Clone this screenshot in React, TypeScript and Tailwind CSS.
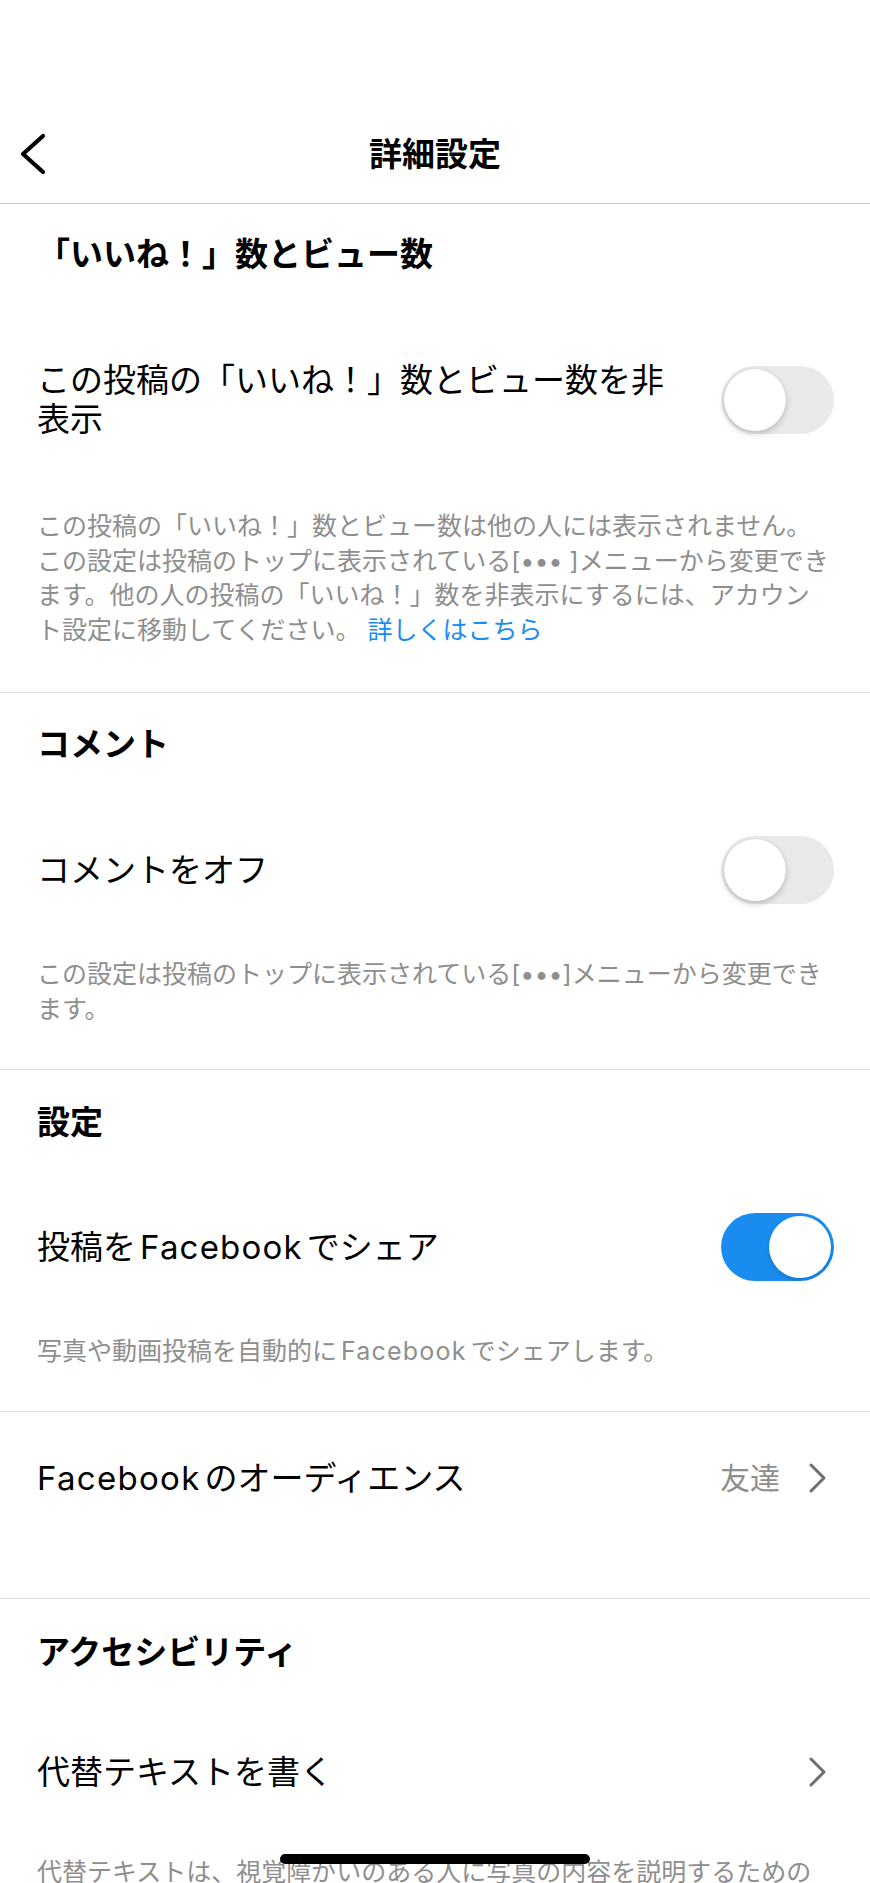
import { ReactNode } from "react"

const Toggle = ({ on }: { on: boolean }) => {
    if (on) {
        return (
            <div className="w-[113px] h-[68px] rounded-full bg-[#1a8cf0] flex items-center justify-end pr-[3px] shrink-0">
                <div className="w-[62px] h-[62px] rounded-full bg-white shadow-[0_2px_4px_rgba(0,0,0,0.15)]" />
            </div>
        )
    }
    return (
        <div className="w-[113px] h-[68px] rounded-full bg-[#e9e9eb] flex items-center pl-[3px] shrink-0">
            <div className="w-[62px] h-[62px] rounded-full bg-white shadow-[0_3px_6px_rgba(0,0,0,0.18),0_0_1px_rgba(0,0,0,0.2)]" />
        </div>
    )
}

const Chevron = () => (
    <svg width="22" height="32" viewBox="0 0 22 32" fill="none" className="shrink-0">
        <path d="M4 3 L17 16 L4 29" stroke="#707070" strokeWidth="3" strokeLinecap="round" strokeLinejoin="round" />
    </svg>
)

const Heading = ({ children, className }: { children: ReactNode; className: string }) => (
    <h2 className={"pl-[37px] text-[33px] leading-[44px] font-bold text-black " + className}>{children}</h2>
)

const Desc = ({ children, className }: { children: ReactNode; className: string }) => (
    <p className={"pl-[37px] pr-[20px] text-[25px] leading-[34.5px] text-[#8e8e8e] " + className}>{children}</p>
)

export default function App() {
    return (
        <div className="bg-white min-h-screen w-full font-[Inter,'Noto_Sans_CJK_JP',sans-serif] text-black overflow-hidden">
            <div className="h-[105px]" />

            {/* header */}
            <header className="h-[99px] border-b border-[#c4c4c6] grid grid-cols-[1fr_auto_1fr] items-center">
                <div className="pl-[19px] flex items-center">
                    <svg width="28" height="44" viewBox="0 0 28 44" fill="none">
                        <path d="M24 4 L4 22 L24 40" stroke="#000" strokeWidth="4.2" strokeLinecap="round" strokeLinejoin="round" />
                    </svg>
                </div>
                <h1 className="text-[33px] leading-[44px] font-bold">詳細設定</h1>
                <div />
            </header>

            {/* likes & views */}
            <section className="border-b border-[#dcdcdc]">
                <Heading className="pt-[28px]">「いいね！」数とビュー数</Heading>
                <div className="mt-[85px] pl-[37px] pr-[36px] flex items-center justify-between">
                    <span className="max-w-[650px] text-[33px] leading-[39px]">この投稿の「いいね！」数とビュー数を非表示</span>
                    <Toggle on={false} />
                </div>
                <Desc className="mt-[70px] pb-[45px]">
                    この投稿の「いいね！」数とビュー数は他の人には表示されません。<br />
                    この設定は投稿のトップに表示されている[••• ]メニューから変更でき<br />
                    ます。他の人の投稿の「いいね！」数を非表示にするには、アカウン<br />
                    ト設定に移動してください。 <span className="text-[#1a8cf0]">詳しくはこちら</span>
                </Desc>
            </section>

            {/* comments */}
            <section className="border-b border-[#dcdcdc]">
                <Heading className="pt-[29px]">コメント</Heading>
                <div className="mt-[70px] pl-[37px] pr-[36px] flex items-center justify-between">
                    <span className="text-[33px] leading-[39px]">コメントをオフ</span>
                    <Toggle on={false} />
                </div>
                <Desc className="mt-[53px] pb-[43px]">
                    この設定は投稿のトップに表示されている[•••]メニューから変更でき<br />
                    ます。
                </Desc>
            </section>

            {/* settings */}
            <section className="border-b border-[#dcdcdc]">
                <Heading className="pt-[30px]">設定</Heading>
                <div className="mt-[69px] pl-[37px] pr-[36px] flex items-center justify-between">
                    <span className="text-[33px] leading-[39px]">
                        投稿を<span className="px-[4px] tracking-[1.2px]">Facebook</span>でシェア
                    </span>
                    <Toggle on={true} />
                </div>
                <Desc className="mt-[53px] pb-[42.5px]">
                    写真や動画投稿を自動的に<span className="px-[4px] tracking-[1.2px]">Facebook</span>でシェアします。
                </Desc>
            </section>

            {/* audience */}
            <section className="border-b border-[#dcdcdc] pt-[46.5px] pb-[100.5px]">
                <div className="pl-[37px] pr-[41px] flex items-center justify-between">
                    <span className="text-[33px] leading-[39px]">
                        <span className="pr-[4px] tracking-[1.3px]">Facebook</span>のオーディエンス
                    </span>
                    <div className="flex items-center gap-[27px]">
                        <span className="text-[30px] leading-[39px] text-[#8e8e8e]">友達</span>
                        <Chevron />
                    </div>
                </div>
            </section>

            {/* accessibility */}
            <section>
                <Heading className="pt-[31px]">アクセシビリティ</Heading>
                <div className="mt-[78.5px] pl-[37px] pr-[41px] flex items-center justify-between">
                    <span className="text-[33px] leading-[39px]">代替テキストを書く</span>
                    <Chevron />
                </div>
                <Desc className="mt-[63px] pb-[40px]">
                    代替テキストは、視覚障がいのある人に写真の内容を説明するための<br />
                    ものです。代替テキストは写真ごとに自動的に作成されますが、自分<br />
                    で書くこともできます。
                </Desc>
            </section>

            {/* home indicator */}
            <div className="fixed bottom-[19px] left-1/2 -translate-x-1/2 w-[310px] h-[10px] rounded-full bg-black" />
        </div>
    )
}
